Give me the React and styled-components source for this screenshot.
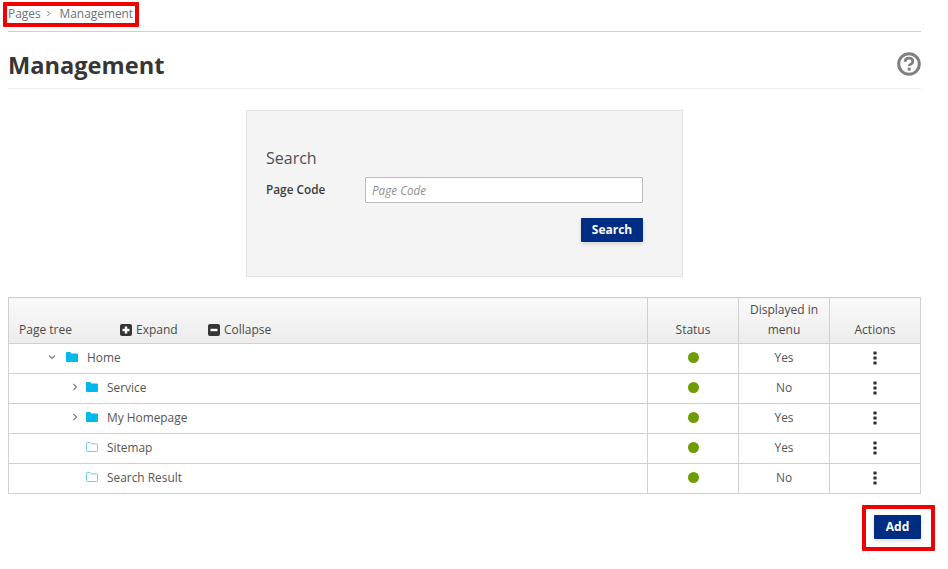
import React from 'react'
import styled, { createGlobalStyle } from 'styled-components'

const GlobalStyle = createGlobalStyle`
    html, body {
        margin: 0;
        padding: 0;
        background: #fff;
        font-family: "Open Sans", "Liberation Sans", sans-serif;
        color: #363636;
    }
`

const rows = [
    { name: 'Home', level: 0, type: 'open', shown: 'Yes' },
    { name: 'Service', level: 1, type: 'closed', shown: 'No' },
    { name: 'My Homepage', level: 1, type: 'closed', shown: 'Yes' },
    { name: 'Sitemap', level: 1, type: 'leaf', shown: 'Yes' },
    { name: 'Search Result', level: 1, type: 'leaf', shown: 'No' },
]

const Chevron = ({ open }) => (
    <svg width="8" height="8" viewBox="0 0 8 8" fill="none" stroke="#7a7a7a" strokeWidth="1.1">
        {open ? <path d="M1 2.5 L4 5.5 L7 2.5" /> : <path d="M2.5 1 L5.5 4 L2.5 7" />}
    </svg>
)

const FolderIcon = ({ filled }) => (
    <svg width="12" height="10" viewBox="0 0 12 10">
        {filled ? (
            <path d="M1 0h3.2l1.2 1.4H11a1 1 0 0 1 1 1V9a1 1 0 0 1-1 1H1a1 1 0 0 1-1-1V1a1 1 0 0 1 1-1z" fill="#00b9eb" />
        ) : (
            <path d="M1.2.5h2.8l1.2 1.4h5.6a.7.7 0 0 1 .7.7v6.2a.7.7 0 0 1-.7.7H1.2a.7.7 0 0 1-.7-.7V1.2a.7.7 0 0 1 .7-.7z" fill="none" stroke="#6fcdea" />
        )}
    </svg>
)

const SquareIcon = ({ plus }) => (
    <svg width="12" height="12" viewBox="0 0 12 12">
        <rect width="12" height="12" rx="2" fill="#363636" />
        <rect x="2.5" y="4.8" width="7" height="2.4" fill="#fff" />
        {plus && <rect x="4.8" y="2.5" width="2.4" height="7" fill="#fff" />}
    </svg>
)

const HelpIcon = () => (
    <svg width="24" height="24" viewBox="0 0 24 24" fill="none">
        <circle cx="12" cy="12" r="10.3" stroke="#808080" strokeWidth="3" />
        <path d="M8.2 9.8c0-2.4 1.7-3.6 3.8-3.6s3.8 1.2 3.8 3.2c0 2.7-3.6 2.6-3.6 4.7" stroke="#808080" strokeWidth="2.8" />
        <rect x="10.7" y="15.6" width="3" height="3" fill="#808080" />
    </svg>
)

const KebabIcon = () => (
    <svg width="4" height="14" viewBox="0 0 4 14" fill="#2e2e2e">
        <rect x="0.4" y="0.5" width="3.2" height="3" rx="0.4" />
        <rect x="0.4" y="5.5" width="3.2" height="3" rx="0.4" />
        <rect x="0.4" y="10.5" width="3.2" height="3" rx="0.4" />
    </svg>
)

const App = () => {
    return (
        <>
            <GlobalStyle />
            <Page>
                <Breadcrumb>
                    <Highlight $top={2} $left={-5} $right={-6} $bottom={-1} />
                    <span>Pages</span>
                    <Sep>
                        <Chevron />
                    </Sep>
                    <span>Management</span>
                </Breadcrumb>
                <TitleBar>
                    <Title>Management</Title>
                    <HelpWrap>
                        <HelpIcon />
                    </HelpWrap>
                </TitleBar>
                <SearchWrap>
                    <SearchCard>
                        <SearchTitle>Search</SearchTitle>
                        <FormRow>
                            <FieldLabel htmlFor="pageCode">Page Code</FieldLabel>
                            <TextInput id="pageCode" placeholder="Page Code" />
                        </FormRow>
                        <CardActions>
                            <PrimaryButton>Search</PrimaryButton>
                        </CardActions>
                    </SearchCard>
                </SearchWrap>
                <Table>
                    <colgroup>
                        <col style={{ width: 639 }} />
                        <col style={{ width: 91 }} />
                        <col style={{ width: 91 }} />
                        <col style={{ width: 91 }} />
                    </colgroup>
                    <thead>
                        <tr>
                            <HeadCell $left>
                                <HeadTools>
                                    <TreeLabel>Page tree</TreeLabel>
                                    <ToolLink $width={88}>
                                        <SquareIcon plus />
                                        Expand
                                    </ToolLink>
                                    <ToolLink>
                                        <SquareIcon />
                                        Collapse
                                    </ToolLink>
                                </HeadTools>
                            </HeadCell>
                            <HeadCell>Status</HeadCell>
                            <HeadCell>Displayed in menu</HeadCell>
                            <HeadCell>Actions</HeadCell>
                        </tr>
                    </thead>
                    <tbody>
                        {rows.map((row) => (
                            <tr key={row.name}>
                                <TreeCell>
                                    <TreeRow $level={row.level}>
                                        <Toggle $nudge={row.type === 'closed'}>
                                            {row.type !== 'leaf' && <Chevron open={row.type === 'open'} />}
                                        </Toggle>
                                        <FolderIcon filled={row.type !== 'leaf'} />
                                        <PageName>{row.name}</PageName>
                                    </TreeRow>
                                </TreeCell>
                                <Cell>
                                    <StatusDot />
                                </Cell>
                                <Cell>{row.shown}</Cell>
                                <Cell>
                                    <KebabIcon />
                                </Cell>
                            </tr>
                        ))}
                    </tbody>
                </Table>
                <Footer>
                    <AddWrap>
                        <Highlight $top={-10} $left={-12} $right={-14} $bottom={-12} />
                        <PrimaryButton $small>Add</PrimaryButton>
                    </AddWrap>
                </Footer>
            </Page>
        </>
    )
}

const Page = styled.div`
    width: 913px;
    margin-left: 8px;
`

const Breadcrumb = styled.div`
    position: relative;
    width: max-content;
    height: 26px;
    display: flex;
    align-items: center;
    font-size: 11.9px;
    color: #6a717a;
    box-sizing: border-box;
`

const Highlight = styled.div`
    position: absolute;
    top: ${(p) => p.$top}px;
    left: ${(p) => p.$left}px;
    right: ${(p) => p.$right}px;
    bottom: ${(p) => p.$bottom}px;
    border: 4px solid #f00000;
    border-radius: 1px;
    pointer-events: none;
`

const Sep = styled.span`
    display: flex;
    margin: 0 8px 0 4px;
    svg {
        width: 7px;
        height: 7px;
    }
`

const TitleBar = styled.div`
    margin-top: 5px;
    height: 58px;
    box-sizing: border-box;
    border-top: 1px solid #cfcfcf;
    border-bottom: 1px solid #ececec;
    display: flex;
    align-items: center;
    justify-content: space-between;
    padding-top: 9px;
`

const Title = styled.h1`
    margin: 0;
    font-size: 23.6px;
    font-weight: 700;
    color: #363636;
`

const HelpWrap = styled.span`
    display: flex;
    margin-bottom: 2px;
`

const SearchWrap = styled.div`
    display: flex;
    justify-content: center;
    margin-top: 21px;
`

const SearchCard = styled.div`
    width: 437px;
    height: 167px;
    box-sizing: border-box;
    background: #f4f4f4;
    border: 1px solid #e2e2e2;
    padding: 37px 39px 0 19px;
`

const SearchTitle = styled.div`
    font-size: 16px;
    line-height: 20px;
    color: #4a4f55;
`

const FormRow = styled.div`
    display: flex;
    align-items: center;
    margin-top: 9px;
`

const FieldLabel = styled.label`
    width: 99px;
    font-size: 11.8px;
    font-weight: 600;
    color: #3d3d3d;
    margin-top: -2px;
`

const TextInput = styled.input`
    width: 278px;
    height: 26px;
    box-sizing: border-box;
    background: #fff;
    border: 1px solid #bbb;
    border-radius: 1px;
    padding: 0 6px;
    font-family: inherit;
    font-size: 11.7px;
    outline: none;
    &::placeholder {
        color: #8f8f8f;
        font-style: italic;
        opacity: 1;
    }
`

const CardActions = styled.div`
    display: flex;
    justify-content: flex-end;
    margin-top: 15px;
`

const PrimaryButton = styled.button`
    display: block;
    width: ${(p) => (p.$small ? 47 : 62)}px;
    height: 24px;
    padding: 0 0 2px;
    border: none;
    border-radius: 1px;
    background: #002d84;
    color: #fff;
    font-family: inherit;
    font-size: 12px;
    font-weight: 700;
    box-shadow: 0 2px 4px rgba(0, 0, 0, 0.14);
`

const Table = styled.table`
    width: 912px;
    margin-top: 20px;
    table-layout: fixed;
    border-collapse: collapse;
    font-size: 11.9px;
    color: #555;
`

const HeadCell = styled.th`
    height: 46px;
    box-sizing: border-box;
    border: 1px solid #d0d0d0;
    background: linear-gradient(#fafafa, #ececec);
    font-weight: 500;
    font-size: 12px;
    line-height: 20px;
    color: #4a4a4a;
    vertical-align: bottom;
    text-align: ${(p) => (p.$left ? 'left' : 'center')};
    padding: 2px 8px 3px;
`

const HeadTools = styled.div`
    display: flex;
    align-items: center;
    padding-left: 2px;
`

const TreeLabel = styled.span`
    width: 101px;
`

const ToolLink = styled.span`
    display: flex;
    align-items: center;
    gap: 4px;
    width: ${(p) => (p.$width ? `${p.$width}px` : 'auto')};
`

const Cell = styled.td`
    height: 30px;
    box-sizing: border-box;
    padding: 0 0 3px;
    border: 1px solid #d0d0d0;
    text-align: center;
    vertical-align: middle;
    line-height: 14px;
    > svg {
        vertical-align: middle;
    }
`

const TreeCell = styled(Cell)`
    text-align: left;
`

const TreeRow = styled.div`
    display: flex;
    align-items: center;
    padding-left: ${(p) => 39 + p.$level * 20}px;
`

const Toggle = styled.span`
    width: 18px;
    display: flex;
    align-items: center;
    padding-left: ${(p) => (p.$nudge ? 3 : 0)}px;
    box-sizing: border-box;
`

const PageName = styled.span`
    margin-left: 9px;
`

const StatusDot = styled.span`
    display: inline-block;
    width: 11px;
    height: 11px;
    border-radius: 50%;
    background: #6e9d00;
    vertical-align: middle;
    margin-bottom: 2px;
`

const Footer = styled.div`
    display: flex;
    justify-content: flex-end;
    margin-top: 21px;
    height: 54px;
`

const AddWrap = styled.div`
    position: relative;
    height: 24px;
`

export default App
